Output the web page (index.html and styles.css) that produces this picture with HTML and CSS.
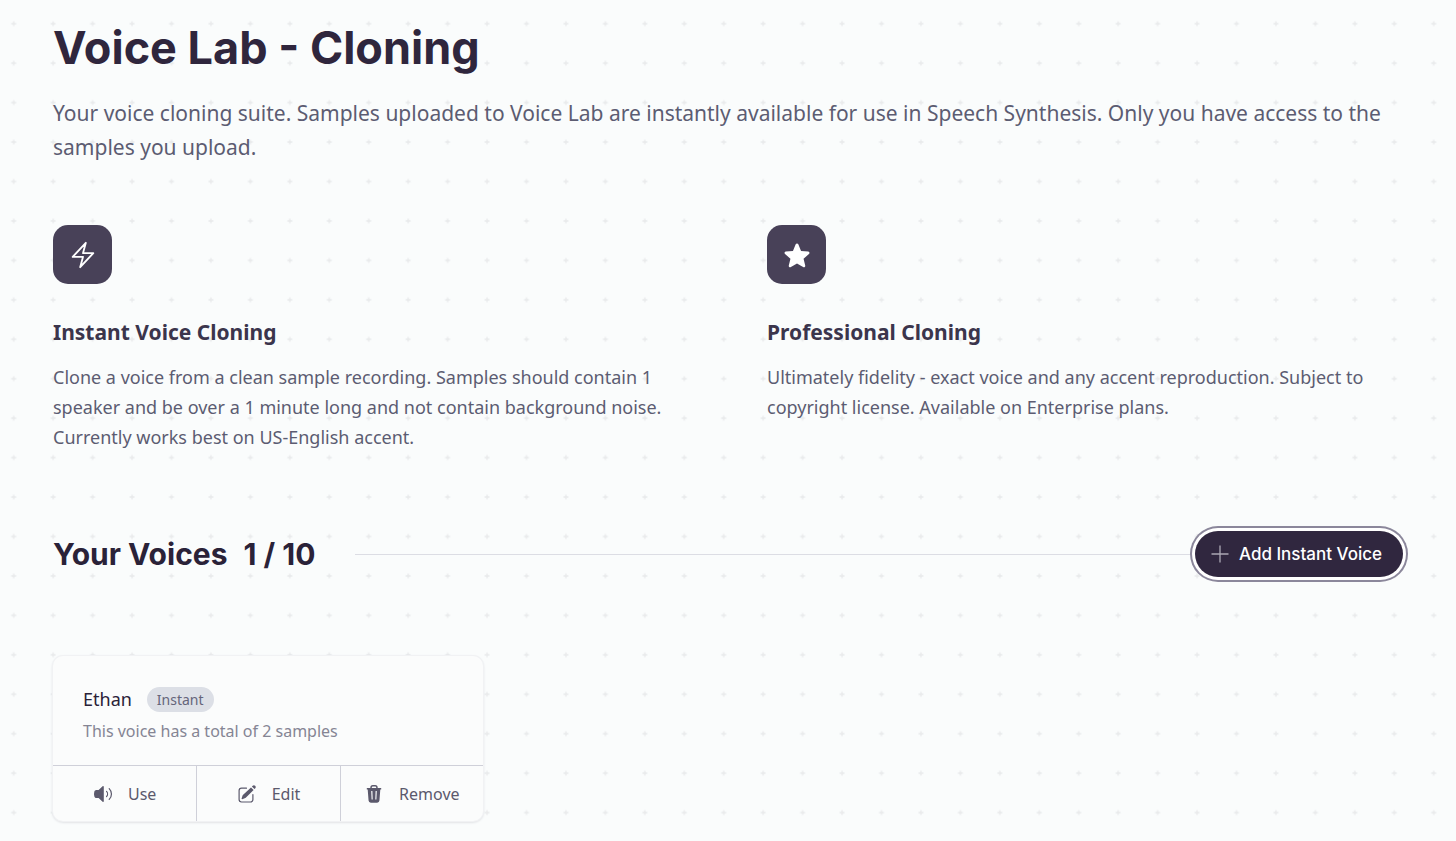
FILE: index.html
```html
<!DOCTYPE html>
<html lang="en">
<head>
<meta charset="utf-8">
<meta name="viewport" content="width=device-width, initial-scale=1">
<title>Voice Lab - Cloning</title>
<link rel="stylesheet" href="styles.css">
</head>
<body class="page">
<main class="content">
  <header class="intro">
    <h1 class="intro-title">Voice Lab - Cloning</h1>
    <p class="intro-text">Your voice cloning suite. Samples uploaded to Voice Lab are instantly available for use in Speech Synthesis. Only you have access to the samples you upload.</p>
  </header>

  <section class="features">
    <article class="feature">
      <div class="feature-icon">
        <svg viewBox="0 0 24 24" width="30" height="30" fill="none" stroke="currentColor" stroke-width="1.5" stroke-linecap="round" stroke-linejoin="round" aria-hidden="true"><path d="M3.75 13.5l10.5-11.25L12 10.5h8.25L9.75 21.75 12 13.5H3.75z"/></svg>
      </div>
      <h2 class="feature-title">Instant Voice Cloning</h2>
      <p class="feature-text">Clone a voice from a clean sample recording. Samples should contain 1 speaker and be over a 1 minute long and not contain background noise. Currently works best on US-English accent.</p>
    </article>
    <article class="feature">
      <div class="feature-icon">
        <svg viewBox="0 0 20 20" width="30" height="30" fill="currentColor" aria-hidden="true"><path d="M10.868 2.884c-.321-.772-1.415-.772-1.736 0l-1.830 4.401-4.753.381c-.833.067-1.171 1.107-.536 1.651l3.620 3.102-1.106 4.637c-.194.813.691 1.456 1.405 1.020L10 15.591l4.069 2.485c.713.436 1.598-.207 1.404-1.020l-1.106-4.637 3.620-3.102c.635-.544.297-1.584-.536-1.650l-4.752-.382-1.831-4.401z"/></svg>
      </div>
      <h2 class="feature-title">Professional Cloning</h2>
      <p class="feature-text">Ultimately fidelity - exact voice and any accent reproduction. Subject to copyright license. Available on Enterprise plans.</p>
    </article>
  </section>

  <section class="voices">
    <div class="voices-bar">
      <h2 class="voices-title"><span>Your Voices</span><span>1 / 10</span></h2>
      <div class="voices-rule"></div>
      <button class="add-button" type="button">
        <svg viewBox="0 0 18 18" width="18" height="18" fill="none" stroke="currentColor" stroke-width="1.3" aria-hidden="true"><path d="M9 .5v17M.5 9h17"/></svg>
        Add Instant Voice
      </button>
    </div>

    <div class="voice-grid">
      <article class="voice-card">
        <div class="voice-info">
          <div class="voice-head">
            <h3 class="voice-name">Ethan</h3>
            <span class="voice-tag">Instant</span>
          </div>
          <p class="voice-note">This voice has a total of 2 samples</p>
        </div>
        <div class="voice-actions">
          <button class="voice-action" type="button">
            <svg viewBox="0 0 20 20" width="20" height="20" aria-hidden="true"><path fill="currentColor" d="M9.600 2.300c.500-.450 1.200-.150 1.200.500v14.400c0 .650-.700.950-1.200.500L5.600 14H3.300C2.300 14 1.600 13.200 1.300 12.200a8.500 8.500 0 0 1 0-4.400C1.600 6.800 2.300 6 3.300 6h2.300z"/><path fill="none" stroke="currentColor" stroke-width="1.200" stroke-linecap="round" d="M13.500 7.400c1.400 1.400 1.400 3.800 0 5.200M16.200 4.600a7.600 7.600 0 0 1 0 10.800"/></svg>
            Use
          </button>
          <button class="voice-action" type="button">
            <svg viewBox="0 0 20 20" width="20" height="20" aria-hidden="true"><path fill="currentColor" d="M14 3.400 16.600 6 9 13.600a3 3 0 0 1-1.300.750l-2.500.800c-.400.100-.700-.200-.600-.600l.800-2.500a3 3 0 0 1 .750-1.300zM14.900 2.500l.8-.8a1.850 1.850 0 0 1 2.600 2.600l-.8.8z"/><path fill="none" stroke="currentColor" stroke-width="1.200" stroke-linecap="round" d="M9.500 4.200h-5a2.400 2.400 0 0 0-2.400 2.400v9a2.400 2.400 0 0 0 2.400 2.400h9a2.400 2.400 0 0 0 2.400-2.400v-5"/></svg>
            Edit
          </button>
          <button class="voice-action" type="button">
            <svg viewBox="0 0 20 20" width="20" height="20" fill="currentColor" aria-hidden="true"><path fill-rule="evenodd" d="M6.300 4V3.500A2.500 2.500 0 0 1 8.800 1h2.400a2.500 2.500 0 0 1 2.500 2.500V4h3.500v1.500h-.900l-.850 11.100A2.300 2.300 0 0 1 13.150 18.700h-6.300a2.300 2.300 0 0 1-2.300-2.100L3.700 5.500h-.900V4zM7.800 4h4.400v-.500a1 1 0 0 0-1-1H8.800a1 1 0 0 0-1 1zM7.200 7l.400 8.500h1.100L8.400 7zM11.600 7l-.300 8.500h1.100l.400-8.500z"/></svg>
            Remove
          </button>
        </div>
      </article>
    </div>
  </section>
</main>
</body>
</html>
```

FILE: styles.css
```css
* {
  box-sizing: border-box;
}

.page {
  margin: 0;
  min-height: 100vh;
  color: #5c5c72;
  font-family: "Noto Sans", sans-serif;
  background-color: #fafcfc;
  /* nine by nine plus marks per tile */
  background-image: url("data:image/svg+xml,%3Csvg xmlns='http://www.w3.org/2000/svg' viewBox='0 0 360 360'%3E%3Cpattern id='p' width='40' height='40' patternUnits='userSpaceOnUse'%3E%3Cpath d='M20 17.500v5M17.500 20h5' stroke='%23e8eaeb' stroke-width='1.300'/%3E%3C/pattern%3E%3Crect width='360' height='360' fill='url(%23p)'/%3E%3C/svg%3E");
  background-size: 355px 355px;
  background-position: -6px 4px;
}

.content {
  padding: 20px 53px;
}

.intro-title {
  margin: 0;
  color: #2f263d;
  font: 700 45px/56px Inter, sans-serif;
}

.intro-text {
  margin: 20px 0 0;
  font-size: 21px;
  line-height: 34px;
}

.features {
  display: grid;
  grid-template-columns: 1fr 1fr;
  gap: 78px;
  margin-top: 61px;
}

.feature-icon {
  display: grid;
  place-items: center;
  width: 59px;
  height: 59px;
  border-radius: 15px;
  color: #fff;
  background: #484158;
}

.feature-title {
  margin: 30px 0 0;
  color: #3b354c;
  font-size: 21px;
  font-weight: 700;
  line-height: 36px;
}

.feature-text {
  margin: 12px 0 0;
  font-size: 18px;
  line-height: 30px;
}

.voices {
  margin-top: 79px;
}

.voices-bar {
  display: flex;
  align-items: center;
}

.voices-title {
  display: flex;
  gap: 16px;
  margin: 0;
  color: #2a2238;
  font: 700 30px/36px Inter, sans-serif;
}

.voices-rule {
  flex: 1;
  height: 1px;
  margin-left: 40px;
  background: #dcdde4;
}

.add-button {
  display: flex;
  align-items: center;
  gap: 10px;
  height: 46px;
  padding: 0 21px 0 16px;
  border: 0;
  border-radius: 23px;
  color: #fff;
  background: #30273f;
  box-shadow: 0 0 0 3px #fff, 0 0 0 5px #8b879b;
  font: 500 17px/24px Inter, sans-serif;
}

.add-button svg {
  color: #aba8b4;
}

.voice-grid {
  display: grid;
  grid-template-columns: repeat(3, 1fr);
  gap: 30px;
  margin-top: 79px;
}

.voice-card {
  overflow: hidden;
  border-radius: 10px;
  background: #fbfcfc;
  box-shadow: 0 0 0 1px #f1f2f4, 0 1px 3px #c9cad0;
}

.voice-info {
  padding: 28px 30px 21px;
}

.voice-head {
  display: flex;
  align-items: center;
  gap: 15px;
}

.voice-name {
  margin: 0;
  color: #2a2238;
  font-size: 18px;
  font-weight: 400;
  line-height: 30px;
}

.voice-tag {
  padding: 0 10px;
  border-radius: 13px;
  color: #65657a;
  background: #dcdfe6;
  font-size: 14px;
  line-height: 25px;
}

.voice-note {
  margin: 4px 0 0;
  color: #858594;
  font-size: 16px;
  line-height: 26px;
}

.voice-actions {
  display: grid;
  grid-template-columns: repeat(3, 1fr);
  border-top: 1px solid #cfd0d9;
}

.voice-action {
  display: flex;
  align-items: center;
  justify-content: center;
  gap: 15px;
  height: 55px;
  padding: 0;
  border: 0;
  color: #5b596c;
  background: none;
  font: 400 16px/24px "Noto Sans", sans-serif;
}

.voice-action + .voice-action {
  border-left: 1px solid #cfd0d9;
}
```
